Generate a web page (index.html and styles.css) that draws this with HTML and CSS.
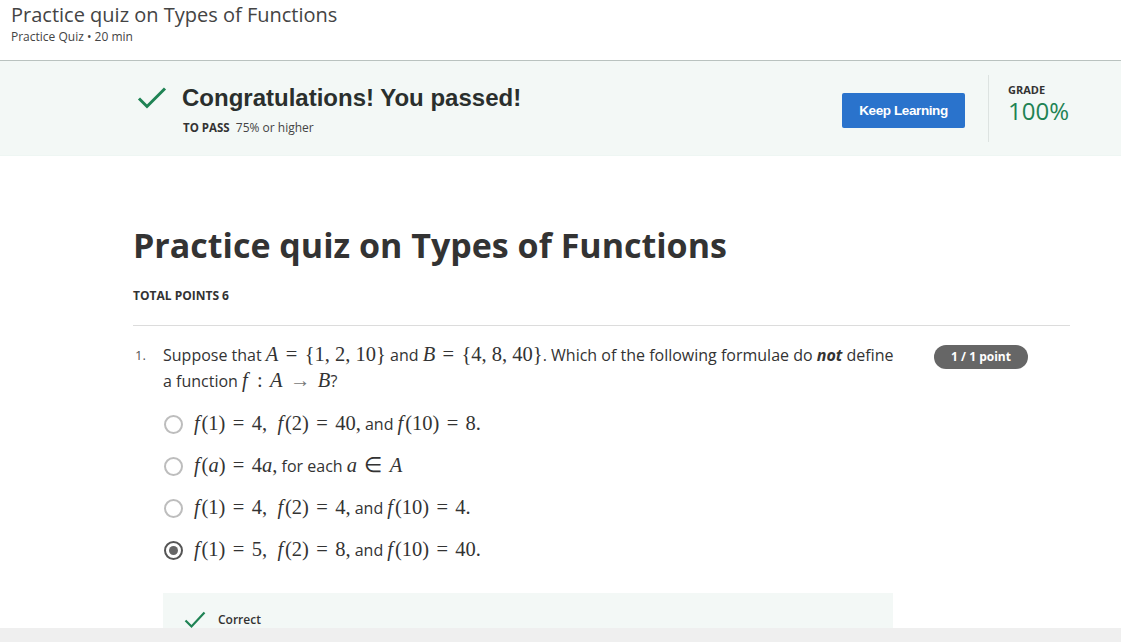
FILE: index.html
```html
<!DOCTYPE html>
<html>
<head>
<meta charset="utf-8">
<link rel="stylesheet" href="styles.css">
</head>
<body>
<header class="top">
  <h1 class="top-title">Practice quiz on Types of Functions</h1>
  <div class="top-sub">Practice Quiz • 20 min</div>
</header>
<section class="banner">
  <div class="banner-inner">
    <div class="pass">
      <svg class="pass-check" width="30" height="24" viewBox="0 0 30 24"><path d="M2 12.5 L10 20.5 L28 2.5" fill="none" stroke="#1f8354" stroke-width="3"/></svg>
      <div>
        <div class="pass-title">Congratulations! You passed!</div>
        <div class="pass-sub"><b>TO PASS</b>&nbsp; 75% or higher</div>
      </div>
    </div>
    <button class="btn">Keep Learning</button>
    <div class="grade">
      <div class="grade-label">GRADE</div>
      <div class="grade-val">100%</div>
    </div>
  </div>
</section>
<main class="main">
  <h2 class="quiz-title">Practice quiz on Types of Functions</h2>
  <div class="total">TOTAL POINTS 6</div>
  <div class="q">
    <div class="q-num">1.</div>
    <div class="q-body">
      <div class="q-text">Suppose that <span class="m"><i>A</i><span class="r">=</span>{1,<span class="s"></span>2,<span class="s"></span>10}</span> and <span class="m"><i>B</i><span class="r">=</span>{4,<span class="s"></span>8,<span class="s"></span>40}</span>. Which of the following formulae do <b><i>not</i></b> define a function <span class="m"><i class="f">f</i><span class="r">:</span><i>A</i><span class="r arr">→</span><i>B</i></span>?</div>
      <div class="opts">
        <div class="opt"><span class="radio"></span><span><span class="m"><i class="f">f</i>(1)<span class="r">=</span>4,<span class="s2"></span><i class="f">f</i>(2)<span class="r">=</span>40,</span> and <span class="m"><i class="f">f</i>(10)<span class="r">=</span>8.</span></span></div>
        <div class="opt"><span class="radio"></span><span><span class="m"><i class="f">f</i>(<i>a</i>)<span class="r">=</span>4<i>a</i>,</span> for each <span class="m"><i>a</i><span class="r">∈</span><i>A</i></span></span></div>
        <div class="opt"><span class="radio"></span><span><span class="m"><i class="f">f</i>(1)<span class="r">=</span>4,<span class="s2"></span><i class="f">f</i>(2)<span class="r">=</span>4,</span> and <span class="m"><i class="f">f</i>(10)<span class="r">=</span>4.</span></span></div>
        <div class="opt"><span class="radio on"></span><span><span class="m"><i class="f">f</i>(1)<span class="r">=</span>5,<span class="s2"></span><i class="f">f</i>(2)<span class="r">=</span>8,</span> and <span class="m"><i class="f">f</i>(10)<span class="r">=</span>40.</span></span></div>
      </div>
      <div class="fb">
        <svg width="22" height="18" viewBox="0 0 22 18"><path d="M1.5 9.5 L7.5 15.5 L20.5 1.5" fill="none" stroke="#1f8354" stroke-width="2.2"/></svg>
        <span class="fb-text">Correct</span>
      </div>
    </div>
    <div class="pill">1 / 1 point</div>
  </div>
</main>
<div class="bottom"></div>
</body>
</html>
```
FILE: styles.css
```css
* { box-sizing: border-box; }
html, body { margin: 0; padding: 0; }
body {
  font-family: "Open Sans", sans-serif;
  color: #333;
  background: #fff;
  overflow: hidden;
  height: 642px;
}
.top {
  height: 61px;
  border-bottom: 1px solid #b9c2bf;
  padding: 2px 11px 0;
}
.top-title {
  margin: 0;
  font-size: 20px;
  font-weight: 400;
  line-height: 26px;
  color: #444;
}
.top-sub {
  font-size: 12px;
  line-height: 16px;
  color: #444;
  margin-top: 1px;
}
.banner {
  background: #f3f8f6;
  height: 95px;
  border-bottom: 1px solid #eef6f3;
}
.banner-inner {
  display: flex;
  align-items: center;
  height: 100%;
  padding-left: 137px;
}
.pass {
  display: flex;
  align-items: flex-start;
  width: 705px;
}
.pass-check { margin-top: 6px; margin-right: 15px; }
.pass-title {
  font-family: "Liberation Sans", Arial, sans-serif;
  font-weight: 700;
  font-size: 24px;
  line-height: 28px;
  color: #2a2f2d;
  margin-top: 4px;
}
.pass-sub {
  font-size: 12px;
  color: #444;
  margin-top: 7px;
  margin-left: 1px;
}
.pass-sub b { font-weight: 700; color: #333; font-size: 11.5px; }
.btn {
  width: 123px;
  height: 35px;
  background: #2a73cc;
  border: none;
  border-radius: 2px;
  color: #fff;
  font-family: "Liberation Sans", Arial, sans-serif;
  font-weight: 700;
  font-size: 13.5px;
  letter-spacing: -0.4px;
  padding: 0;
  margin-top: 5px;
}
.grade {
  margin-left: 23px;
  border-left: 1px solid #dde3e1;
  height: 67px;
  padding-left: 19px;
  padding-top: 8px;
}
.grade-label {
  font-size: 11px;
  font-weight: 700;
  color: #333;
  line-height: 14px;
}
.grade-val {
  font-size: 24px;
  color: #1f8354;
  line-height: 28px;
}
.main {
  padding-left: 133px;
  width: 1070px;
}
.quiz-title {
  margin: 66px 0 0;
  font-size: 34px;
  font-weight: 700;
  line-height: 46px;
  color: #333;
}
.total {
  font-size: 12px;
  font-weight: 700;
  margin-top: 20px;
  line-height: 16px;
}
.q {
  border-top: 1px solid #dcdcdc;
  margin-top: 21px;
  padding-top: 16px;
  display: flex;
  align-items: flex-start;
}
.q-num {
  width: 30px;
  padding-left: 2px;
  font-size: 13px;
  line-height: 26px;
  color: #555;
}
.q-body { width: 740px; }
.q-text {
  font-size: 16px;
  line-height: 26px;
  color: #333;
  width: 735px;
}
.m {
  font-family: "Liberation Serif", "Times New Roman", serif;
  font-size: 20.5px;
  line-height: 20px;
  white-space: nowrap;
}
.m i { font-style: italic; }
.m .f { margin-right: 0.09em; }
.r { margin: 0 0.36em; }
.s { display: inline-block; width: 0.25em; }
.s2 { display: inline-block; width: 0.5em; }
.arr { color: #777; }
.pill {
  margin-left: 31px;
  margin-top: 3px;
  width: 94px;
  height: 24px;
  border-radius: 12px;
  background: #666;
  color: #fff;
  font-size: 12px;
  font-weight: 700;
  line-height: 24px;
  text-align: center;
}
.opts {
  margin-top: 17px;
  display: flex;
  flex-direction: column;
  gap: 16px;
}
.opt {
  display: flex;
  align-items: center;
  height: 26px;
  font-size: 16px;
  color: #333;
}
.radio {
  width: 19px;
  height: 19px;
  border: 2px solid #bdbdbd;
  border-radius: 50%;
  margin-left: 1px;
  margin-right: 11px;
  flex: none;
  display: flex;
  align-items: center;
  justify-content: center;
}
.radio.on { border-color: #555; }
.radio.on::after {
  content: "";
  width: 9px;
  height: 9px;
  border-radius: 50%;
  background: #666;
}
.fb {
  margin-top: 30px;
  width: 730px;
  height: 60px;
  background: #f3f8f6;
  display: flex;
  align-items: flex-start;
  padding: 18px 0 0 21px;
  gap: 12px;
}
.fb-text {
  font-size: 12px;
  font-weight: 600;
  color: #333;
  line-height: 18px;
}
.bottom {
  position: fixed;
  left: 0;
  right: 0;
  bottom: 0;
  height: 14px;
  background: #efefef;
}
```
